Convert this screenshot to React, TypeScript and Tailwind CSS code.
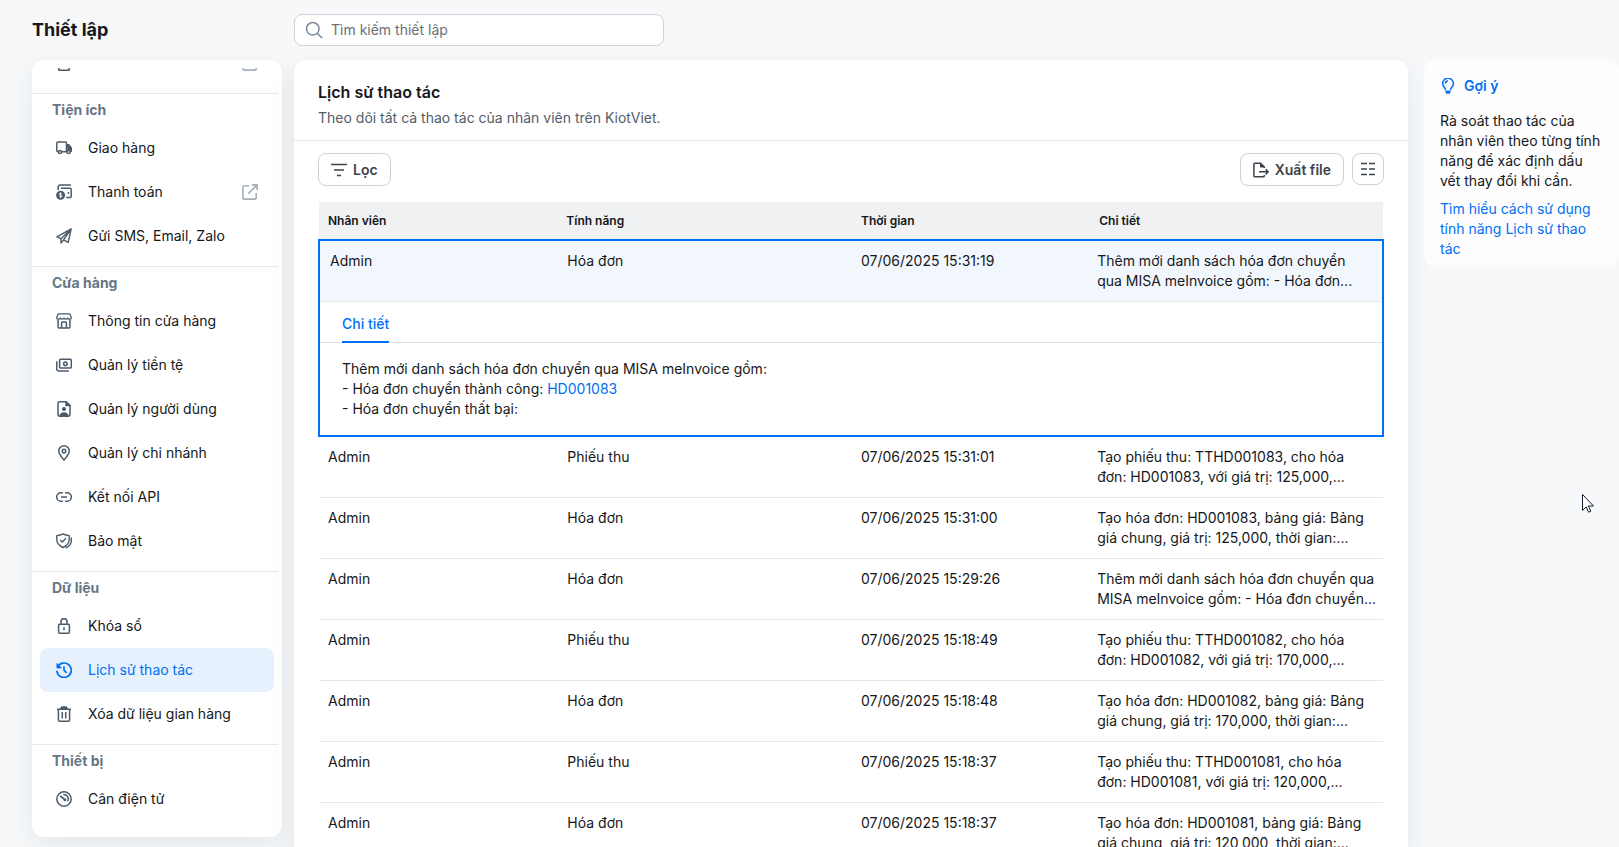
import type { ReactNode } from "react";

type IconProps = { className?: string };

function Icon({ className = "", children }: IconProps & { children: ReactNode }) {
  return (
    <svg viewBox="0 0 16 16" fill="none" stroke="currentColor" strokeWidth="1.5" strokeLinejoin="round"
      className={`size-4 shrink-0 ${className}`} aria-hidden="true">
      {children}
    </svg>
  );
}

const icons: Record<string, ReactNode> = {
  receipt: <path d="M2.800 1h10.400v14.200H2.800z" />,
  truck: (
    <>
      <path d="M2.400 11.800H2a1.200 1.200 0 0 1-1.200-1.200V3.200A1.200 1.200 0 0 1 2 2h7.300a1.200 1.200 0 0 1 1.200 1.200v8.600H5.600" />
      <path d="M10.500 5h2.300l2.500 3.300v3h-.6M10.500 11.800h.6" />
      <path d="M10.500 5h2.300l2.500 3.300v1.700h-3.300V7z" fill="currentColor" />
      <circle cx="4" cy="12" r="1.600" />
      <circle cx="12.600" cy="12" r="1.600" />
    </>
  ),
  payment: (
    <>
      <path d="M2.200 6V3A2 2 0 0 1 4.200 1H15M5 4.200h9a1.200 1.200 0 0 1 1.200 1.200v7A1.200 1.200 0 0 1 14 13.600h-3.800" />
      <path d="M11.600 9h1.600" strokeWidth="1.800" />
      <circle cx="4.600" cy="11.200" r="4.500" fill="currentColor" stroke="none" />
      <path d="M5.800 9.800c-.6-.7-2.400-.6-2.400.4 0 1.200 2.500.7 2.500 1.900 0 1.100-1.900 1.200-2.600.3M4.600 8.500v5.300" stroke="#fff" strokeWidth=".9" />
    </>
  ),
  send: <path d="M15.200.9.900 8.900l4.100 1.800v4.400l2.500-3.200 4.700 2.500L15.200.9ZM5 10.700 15 1.200 7.500 11.800" strokeWidth="1.400" />,
  store: (
    <>
      <path d="M2.200.9h11.600l1.500 3.600c0 1.100-.7 1.700-1.800 1.700s-1.800-.6-1.800-1.400c0 .8-.8 1.400-1.800 1.400S8 5.600 8 4.800c0 .8-.9 1.400-1.900 1.400s-1.800-.6-1.800-1.400c0 .8-.7 1.400-1.800 1.400S.7 5.600.7 4.500Z" strokeWidth="1.300" />
      <path d="M2.100 6.600V14c0 .7.400 1.100 1.100 1.100h9.600c.7 0 1.100-.4 1.100-1.100V6.600M5.600 15V9.900c0-.5.300-.8.800-.8h3.200c.5 0 .8.300.8.800V15" />
    </>
  ),
  money: (
    <>
      <rect x="3.600" y="2.300" width="11.700" height="8.800" rx="1.200" />
      <path d="M.8 4.200v8a1.700 1.700 0 0 0 1.700 1.700h10.300" />
      <circle cx="9.400" cy="6.700" r="1.800" />
    </>
  ),
  user: (
    <>
      <path d="M10 .8H3.400C2.500.8 2 1.300 2 2.200v11.600c0 .9.500 1.400 1.400 1.400h9.200c.9 0 1.400-.5 1.400-1.400V4.600Z" />
      <path d="M10 .8v3.800h4Z" fill="currentColor" />
      <circle cx="8" cy="8" r="2.100" fill="currentColor" stroke="none" />
      <path d="M3.200 15.200c.5-2.700 2.400-4 4.800-4s4.300 1.300 4.800 4Z" fill="currentColor" stroke="none" />
    </>
  ),
  pin: (
    <>
      <path d="M8 .8a5.300 5.300 0 0 0-5.300 5.300C2.700 9.700 6.500 12.500 8 15.200c1.500-2.700 5.300-5.500 5.300-9.100A5.300 5.300 0 0 0 8 .8Z" />
      <circle cx="8" cy="6" r="1.800" />
    </>
  ),
  link: <path d="M6.800 3.700H5a4.300 4.300 0 0 0 0 8.600h1.800M9.200 3.700H11a4.300 4.300 0 0 1 0 8.600H9.200M5 8h6" />,
  shield: (
    <>
      <path d="M7 .9c-1.800 1-3.900 1.500-6.200 1.700v4.200c0 3.300 2.600 6 6.200 7.700 3.600-1.700 6.200-4.400 6.200-7.700V2.600C10.900 2.400 8.800 1.900 7 .9Z" strokeWidth="1.400" />
      <path d="m4.200 7 2.100 2 3.700-3.700M15.300 4.500v3.300c0 3-1.900 5.500-5.600 7.400" strokeWidth="1.400" />
    </>
  ),
  lock: (
    <>
      <rect x="2.600" y="6.200" width="10.800" height="9" rx="1.200" />
      <path d="M5 6.200V3.700a3 3 0 0 1 6 0v2.500M8 9.200v3" />
    </>
  ),
  history: (
    <>
      <path d="M1.500 5.300A7.200 7.200 0 1 1 .9 8.700" strokeWidth="1.700" />
      <path d="M1 1.600v4.300h4.300Z" fill="currentColor" strokeWidth="1" />
      <path d="M8 4.200V8.200l2.600 2.600" strokeWidth="1.700" />
    </>
  ),
  trash: (
    <>
      <path d="M1 3.300h14M2.400 3.300v10.400c0 .9.600 1.500 1.500 1.500h8.200c.9 0 1.500-.6 1.500-1.500V3.300M6.300 6v6.600M9.700 6v6.600" />
      <path d="M4.400 3.300 5.400.8h5.200l1 2.500Z" fill="currentColor" strokeWidth="1" />
    </>
  ),
  scale: (
    <>
      <circle cx="8" cy="8" r="7.200" />
      <path d="M4.200 4.800 9.200 9" strokeWidth="1.700" />
      <path d="M7.300 3.500a4.600 4.600 0 0 1 4.400 6.900" />
      <circle cx="9" cy="8.900" r="1.400" fill="currentColor" stroke="none" />
    </>
  ),
};

function ExternalIcon() {
  return (
    <Icon className="ml-auto text-[#a3adb8]">
      <path d="M7 1.800H2.600C1.500 1.800.9 2.400.9 3.500v9.900c0 1.100.6 1.700 1.700 1.700h9.900c1.100 0 1.700-.6 1.700-1.700V9M6.200 9.800 14.800 1.200M10 .9h5.200v5.200" strokeWidth="1.600" />
    </Icon>
  );
}

type Item = { label: string; icon: string; external?: boolean; active?: boolean };

const groups: { title: string; items: Item[] }[] = [
  {
    title: "Tiện ích",
    items: [
      { label: "Giao hàng", icon: "truck" },
      { label: "Thanh toán", icon: "payment", external: true },
      { label: "Gửi SMS, Email, Zalo", icon: "send" },
    ],
  },
  {
    title: "Cửa hàng",
    items: [
      { label: "Thông tin cửa hàng", icon: "store" },
      { label: "Quản lý tiền tệ", icon: "money" },
      { label: "Quản lý người dùng", icon: "user" },
      { label: "Quản lý chi nhánh", icon: "pin" },
      { label: "Kết nối API", icon: "link" },
      { label: "Bảo mật", icon: "shield" },
    ],
  },
  {
    title: "Dữ liệu",
    items: [
      { label: "Khóa sổ", icon: "lock" },
      { label: "Lịch sử thao tác", icon: "history", active: true },
      { label: "Xóa dữ liệu gian hàng", icon: "trash" },
    ],
  },
  { title: "Thiết bị", items: [{ label: "Cân điện tử", icon: "scale" }] },
];

const logs = [
  { feature: "Phiếu thu", time: "07/06/2025 15:31:01", detail: ["Tạo phiếu thu: TTHD001083, cho hóa", "đơn: HD001083, với giá trị: 125,000,..."] },
  { feature: "Hóa đơn", time: "07/06/2025 15:31:00", detail: ["Tạo hóa đơn: HD001083, bảng giá: Bảng", "giá chung, giá trị: 125,000, thời gian:..."] },
  { feature: "Hóa đơn", time: "07/06/2025 15:29:26", detail: ["Thêm mới danh sách hóa đơn chuyển qua", "MISA meInvoice gồm: - Hóa đơn chuyển..."] },
  { feature: "Phiếu thu", time: "07/06/2025 15:18:49", detail: ["Tạo phiếu thu: TTHD001082, cho hóa", "đơn: HD001082, với giá trị: 170,000,..."] },
  { feature: "Hóa đơn", time: "07/06/2025 15:18:48", detail: ["Tạo hóa đơn: HD001082, bảng giá: Bảng", "giá chung, giá trị: 170,000, thời gian:..."] },
  { feature: "Phiếu thu", time: "07/06/2025 15:18:37", detail: ["Tạo phiếu thu: TTHD001081, cho hóa", "đơn: HD001081, với giá trị: 120,000,..."] },
  { feature: "Hóa đơn", time: "07/06/2025 15:18:37", detail: ["Tạo hóa đơn: HD001081, bảng giá: Bảng", "giá chung, giá trị: 120,000, thời gian:..."] },
];

function Sidebar() {
  return (
    <nav className="flex h-[calc(100vh-70px)] w-[250px] shrink-0 flex-col rounded-xl bg-white py-2 shadow-[0_8px_24px_rgba(40,50,60,0.08)]">
      {/* scrolled to the end, so the first rows run off the top */}
      <div className="flex min-h-0 flex-1 flex-col justify-end overflow-hidden pr-1">
        <div className="shrink-0 pr-1 pb-2 pl-2">
          <a href="#" aria-label="Mở trang khác" className="flex h-11 items-center px-4 text-[#4b5b6b]">
            <Icon>{icons.receipt}</Icon>
            <ExternalIcon />
          </a>
        </div>
        {groups.map((g) => (
          <div key={g.title} className="shrink-0 border-t border-[#e6e8ea] pb-2">
            <h2 className="px-5 py-[6px] text-sm leading-5 font-bold text-[#667685]">{g.title}</h2>
            <div className="pr-1 pl-2">
              {g.items.map((it) => (
                <a key={it.label} href="#"
                  className={`flex h-11 items-center gap-4 rounded-lg px-4 text-sm ${
                    it.active ? "bg-[#e5f1fd] text-[#0070f4]" : "text-[#15171a]"
                  }`}>
                  <Icon className={it.active ? "" : "text-[#4b5b6b]"}>{icons[it.icon]}</Icon>
                  {it.label}
                  {it.external && <ExternalIcon />}
                </a>
              ))}
            </div>
          </div>
        ))}
      </div>
    </nav>
  );
}

function LogTable() {
  return (
    <table className="w-full table-fixed border-collapse text-left text-sm leading-5 text-[#15171a]">
      <colgroup>
        <col className="w-[22.4%]" />
        <col className="w-[27.6%]" />
        <col className="w-[22.2%]" />
        <col />
      </colgroup>
      <thead>
        <tr className="h-[38px] bg-[#eff1f3] text-xs">
          <th className="px-[9px] font-semibold">Nhân viên</th>
          <th className="px-[9px] font-semibold">Tính năng</th>
          <th className="px-[10px] font-semibold">Thời gian</th>
          <th className="px-3 font-semibold">Chi tiết</th>
        </tr>
      </thead>
      <tbody className="border-2 border-[#0070f4]">
        <tr className="border-b border-b-[#e4e7eb] bg-[#f2f7fe] align-top">
          <td className="px-[10px] py-[10px]">Admin</td>
          <td className="px-[10px] py-[10px]">Hóa đơn</td>
          <td className="px-[10px] py-[10px]">07/06/2025 15:31:19</td>
          <td className="py-[10px] pl-[10px] whitespace-nowrap">
            Thêm mới danh sách hóa đơn chuyển<br />qua MISA meInvoice gồm: - Hóa đơn...
          </td>
        </tr>
        <tr>
          <td colSpan={4}>
            <div className="flex h-[41px] border-b border-[#dfe2e5] px-[22px]">
              <button className="-mb-px border-b-2 border-[#0070f4] pt-1 text-sm font-medium text-[#0070f4]">Chi tiết</button>
            </div>
            <div className="px-[22px] py-4">
              <p>Thêm mới danh sách hóa đơn chuyển qua MISA meInvoice gồm:</p>
              <p>- Hóa đơn chuyển thành công: <a href="#" className="text-[#0070f4]">HD001083</a></p>
              <p>- Hóa đơn chuyển thất bại:</p>
            </div>
          </td>
        </tr>
      </tbody>
      <tbody>
        {logs.map((l, i) => (
          <tr key={i} className="border-b border-[#e4e7eb] align-top">
            <td className="px-[9px] py-[10px]">Admin</td>
            <td className="px-[10px] py-[10px]">{l.feature}</td>
            <td className="px-[10px] py-[10px]">{l.time}</td>
            <td className="py-[10px] pl-[10px] whitespace-nowrap">{l.detail[0]}<br />{l.detail[1]}</td>
          </tr>
        ))}
      </tbody>
    </table>
  );
}

export default function App() {
  return (
    <div className="relative flex h-screen flex-col overflow-hidden bg-[#f6f8fa] font-['Inter',sans-serif] text-[#15171a]">
      <header className="flex h-[60px] shrink-0 items-center pl-8">
        <h1 className="w-[262px] text-lg font-bold">Thiết lập</h1>
        <label className="flex h-8 w-[370px] items-center gap-2 rounded-lg border border-[#cdd1d6] bg-white px-[10px]">
          <svg viewBox="0 0 18 18" fill="none" stroke="#7b8a99" strokeWidth="1.5" className="size-[18px]" aria-hidden="true">
            <circle cx="7.800" cy="7.800" r="6.300" />
            <path d="m12.300 12.300 4.900 4.900" />
          </svg>
          <input type="text" aria-label="Tìm kiếm thiết lập" placeholder="Tìm kiếm thiết lập"
            className="min-w-0 flex-1 text-sm outline-none placeholder:text-[#6b6f75]" />
        </label>
      </header>

      <div className="flex min-h-0 flex-1 items-start pl-8">
        <Sidebar />

        <main className="ml-3 min-w-0 flex-1 rounded-t-xl bg-white shadow-[0_8px_24px_rgba(40,50,60,0.08)]">
          <div className="border-b border-[#e4e7eb] px-6 pt-5 pb-3">
            <h2 className="text-base leading-6 font-semibold">Lịch sử thao tác</h2>
            <p className="mt-1 text-sm leading-5 text-[#525d69]">Theo dõi tất cả thao tác của nhân viên trên KiotViet.</p>
          </div>
          <div className="px-6 pt-3">
            <div className="mb-4 flex items-start gap-2">
              <button className="flex h-[33px] items-center gap-[6px] rounded-lg border border-[#cdd1d6] px-3 text-sm font-semibold text-[#3c434b]">
                <Icon><path d="M0 2.500h16M3 8h10M6 13.500h4" strokeWidth="1.700" /></Icon>
                Lọc
              </button>
              <button className="ml-auto flex h-[33px] items-center gap-[6px] rounded-lg border border-[#cdd1d6] px-3 text-sm font-semibold text-[#3c434b]">
                <Icon>
                  <path d="M11.300 6V5L7.500 1.200H2c-.7 0-1.100.4-1.100 1.100v11.400c0 .7.400 1.100 1.100 1.100h8.200c.7 0 1.100-.4 1.100-1.100V13" />
                  <path d="M7.500 1.200V5h3.800Z" fill="currentColor" strokeWidth="1" />
                  <path d="M6 9.800h9M12.600 7.200l2.600 2.600-2.600 2.600" />
                </Icon>
                Xuất file
              </button>
              <button aria-label="Cột hiển thị" className="flex size-8 items-center justify-center rounded-lg border border-[#cdd1d6] text-[#3c434b]">
                <Icon><path d="M1 2.500h6M9 2.500h6M1 8h6M9 8h6M1 13.500h6M9 13.500h6" strokeWidth="1.700" /></Icon>
              </button>
            </div>
            <LogTable />
          </div>
        </main>

        <aside className="ml-4 w-[195px] shrink-0 rounded-xl bg-[#fdfdfe] px-4 pt-4 pb-2 text-sm leading-5">
          <h2 className="flex items-center gap-2 font-semibold text-[#0070f4]">
            <Icon>
              <path d="M5.600 12.200C5.600 9.600 2.600 8.800 2.600 5.600a5.400 5.400 0 0 1 10.800 0c0 3.200-3 4-3 6.600M5.300 5.600A2.700 2.700 0 0 1 8 3" />
              <path d="M5.400 13h5.200l-1.200 2.600H6.600Z" fill="currentColor" strokeWidth=".6" />
            </Icon>
            Gợi ý
          </h2>
          <p className="mt-[15px]">Rà soát thao tác của nhân viên theo từng tính năng để xác định dấu vết thay đổi khi cần.</p>
          <a href="#" className="mt-2 block text-[#0070f4]">Tìm hiểu cách sử dụng tính năng Lịch sử thao tác</a>
        </aside>
      </div>

      {/* Mouse pointer */}
      <svg viewBox="0 0 12 19" className="absolute top-[494px] right-[25px] h-[19px] w-3" aria-hidden="true">
        <path d="M.5.500v16l3.700-3.600 2.400 5.300 2.200-1-2.400-5.200h5.100Z" fill="#fff" stroke="#111827" />
      </svg>
    </div>
  );
}
